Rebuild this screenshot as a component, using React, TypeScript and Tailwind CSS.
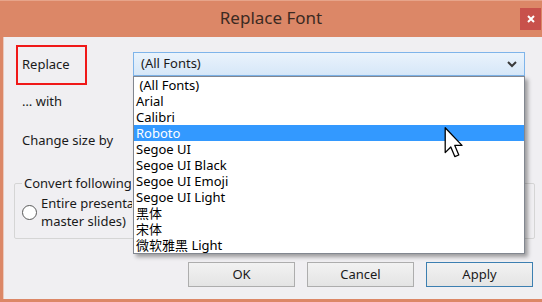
import React from 'react'

const fonts = [
  ' (All Fonts)',
  'Arial',
  'Calibri',
  'Roboto',
  'Segoe UI',
  'Segoe UI Black',
  'Segoe UI Emoji',
  'Segoe UI Light',
  '黑体',
  '宋体',
  '微软雅黑 Light',
]

const Button = ({ label, focused }: { label: string; focused?: boolean }) => (
  <button
    className={
      'w-[107px] h-[25px] text-[13px] text-[#1a1a1a] bg-gradient-to-b from-[#F2F2F2] to-[#E4E4E4] border ' +
      (focused ? 'border-[#3C7FB1]' : 'border-[#ADADAD]')
    }
  >
    {label}
  </button>
)

const App = () => {
  return (
    <div
      className="w-[542px] h-[302px] bg-[#DC8767] flex flex-col overflow-hidden"
      style={{ fontFamily: '"Noto Sans", "Noto Sans CJK SC", sans-serif' }}
    >
      {/* title bar */}
      <div className="h-[37px] relative flex items-center justify-center border-t border-[#E7A48A]">
        <span className="text-[17px] text-[#3B2A22] pb-[2px]">Replace Font</span>
        <div className="absolute right-[1px] top-[7px] w-[21px] h-[22px] bg-[#C8514B] flex items-center justify-center">
          <svg width="8" height="8" viewBox="0 0 8 8">
            <path d="M1 1 L7 7 M7 1 L1 7" stroke="#fff" strokeWidth="2" />
          </svg>
        </div>
      </div>

      {/* client area */}
      <div className="flex-1 ml-[3px] mb-[3px] border-l border-[#EBC9BC] bg-[#F0EFF2] relative flex flex-col text-[13px] text-[#1a1a1a]">
        <div className="mt-[8px] h-[40px] flex items-start pl-[12px]">
          <div className="w-[71px] h-[40px] border-2 border-[#F01818] flex items-center pl-[4px]">Replace</div>
          <div className="ml-[46px] mt-[7px] w-[392px] h-[24px] border border-[#7EB4EA] bg-gradient-to-b from-[#EAF3FC] to-[#D6E7F8] flex items-center justify-between pl-[7px] pr-[7px]">
            <span>(All Fonts)</span>
            <svg width="10" height="7" viewBox="0 0 10 7">
              <path d="M1 1 L5 5 L9 1" fill="none" stroke="#3A3A3A" strokeWidth="2" />
            </svg>
          </div>
        </div>
        <div className="h-[34px] flex items-center pl-[18px]">… with</div>
        <div className="h-[44px] flex items-center pl-[18px]">Change size by</div>

        <fieldset className="mt-[12px] ml-[10px] w-[521px] h-[64px] border border-[#D5D5D5] rounded-[2px] pl-[7px]">
          <legend className="px-[2px] leading-4">
            <span className="block w-[107px] overflow-hidden whitespace-nowrap">Convert following scope</span>
          </legend>
          <div className="flex items-center gap-[4px] mt-[3px]">
            <div className="w-[15px] h-[15px] rounded-full border border-[#5A5A5A] bg-white" />
            <div className="leading-[18px] w-[91px] overflow-hidden whitespace-nowrap">
              Entire presentation (including
              <br />
              master slides)
            </div>
          </div>
        </fieldset>

        <div className="mt-[23px] flex gap-[12px] pl-[184px]">
          <Button label="OK" />
          <Button label="Cancel" />
          <Button label="Apply" focused />
        </div>

        {/* open font list */}
        <div className="absolute left-[129px] top-[39px] w-[392px] border border-[#828790] bg-white shadow-[3px_3px_4px_rgba(0,0,0,0.35)]">
          {fonts.map(f => (
            <div
              key={f}
              className={
                'h-[16px] leading-[16px] pl-[2px] whitespace-pre ' +
                (f === 'Roboto' ? 'bg-[#3399FF] text-white' : 'text-black')
              }
            >
              {f}
            </div>
          ))}
        </div>

        {/* mouse pointer */}
        <svg className="absolute left-[440px] top-[90px]" width="20" height="32" viewBox="0 0 12 20">
          <path
            d="M0.5 0.5 L0.5 16 L4 12.5 L6.5 18.5 L9 17.5 L6.5 11.5 L11 11.5 Z"
            fill="#fff"
            stroke="#000"
            strokeWidth="0.8"
            strokeLinejoin="round"
          />
        </svg>
      </div>
    </div>
  )
}

export default App
